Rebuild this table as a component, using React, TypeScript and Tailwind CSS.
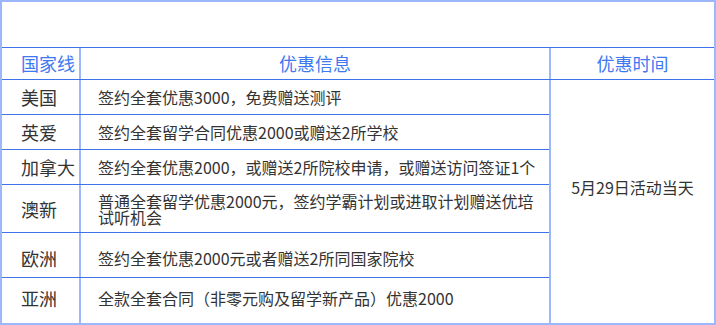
import React from "react";

const rows: { name: string; text: React.ReactNode; h: string; adj: string }[] = [
  { name: "美国", text: "签约全套优惠3000，免费赠送测评", h: "h-[35px]", adj: "" },
  { name: "英爱", text: "签约全套留学合同优惠2000或赠送2所学校", h: "h-[35px]", adj: "" },
  { name: "加拿大", text: "签约全套优惠2000，或赠送2所院校申请，或赠送访问签证1个", h: "h-[35px]", adj: "" },
  {
    name: "澳新",
    text: (
      <>
        普通全套留学优惠2000元，签约学霸计划或进取计划赠送优培
        <br />
        试听机会
      </>
    ),
    h: "h-[48px]",
    adj: "",
  },
  { name: "欧洲", text: "签约全套优惠2000元或者赠送2所同国家院校", h: "h-[45px]", adj: "pt-[6px]" },
  { name: "亚洲", text: "全款全套合同（非零元购及留学新产品）优惠2000", h: "h-[45px]", adj: "pb-[5px]" },
];

export default function App() {
  return (
    <div
      className="w-[716px] h-[325px] bg-white border-2 border-[#9db7fc] text-[16px] leading-4 text-[#333333] flex flex-col"
      style={{ fontFamily: '"Noto Sans CJK SC", "Noto Sans", sans-serif' }}
    >
      <div className="h-[46px] shrink-0 border-b border-[#3d72ea]" />
      <div className="h-[32px] shrink-0 flex border-b border-[#3d72ea] text-[#3f79f2] text-[18px] leading-[18px]">
        <div className="w-[77px] shrink-0 flex items-center pl-[19px] pb-[2px]">国家线</div>
        <div className="w-[470px] shrink-0 border-l-2 border-[#9db7fc] flex items-center justify-center pb-[2px]">
          优惠信息
        </div>
        <div className="flex-1 border-l-2 border-[#9db7fc] flex items-center justify-center pb-[2px]">优惠时间</div>
      </div>
      <div className="flex flex-1">
        <div className="w-[547px] shrink-0 flex flex-col">
          {rows.map((r, i) => (
            <div
              key={r.name}
              className={`${r.h} shrink-0 flex ${i < rows.length - 1 ? "border-b border-[#3d72ea]" : ""}`}
            >
              <div className={`w-[77px] shrink-0 flex items-center pl-[19px] text-[18px] leading-[18px] ${r.adj}`}>
                {r.name}
              </div>
              <div className={`flex-1 border-l-2 border-[#9db7fc] flex items-center pl-[17px] ${r.adj}`}>
                <div>{r.text}</div>
              </div>
            </div>
          ))}
        </div>
        <div className="flex-1 border-l-2 border-[#9db7fc] flex items-center justify-center pb-[30px]">
          5月29日活动当天
        </div>
      </div>
    </div>
  );
}
